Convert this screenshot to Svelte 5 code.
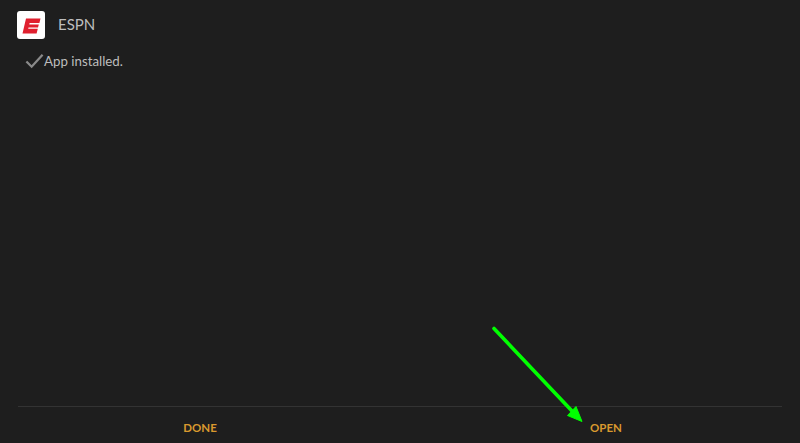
<script>
    const appName = 'ESPN';
    const message = 'App installed.';
</script>

<div class="screen">
    <header class="app-row">
        <div class="app-icon">
            <svg viewBox="0 0 28 28" width="28" height="28">
                <path d="M9 7.5 H23.5 L22.4 12 H12.6 L12.3 13.4 H21.8 L21 16.4 H11.5 L11.2 17.8 H20.8 L19.6 22.5 H5.5 Z" fill="#e0202f" />
            </svg>
        </div>
        <span class="app-name">{appName}</span>
    </header>

    <div class="status">
        <svg class="check" viewBox="0 0 20 16" width="19" height="16">
            <path d="M1.5 8.5 L7 14 L18.5 1.5" fill="none" stroke="#8a8a8a" stroke-width="2.4" />
        </svg>
        <span>{message}</span>
    </div>

    <footer class="actions">
        <button>DONE</button>
        <button>OPEN</button>
    </footer>

    <svg class="arrow" viewBox="0 0 800 443" width="800" height="443">
        <line x1="494" y1="328.5" x2="572" y2="411" stroke="#00ff00" stroke-width="3.6" stroke-linecap="round" />
        <path d="M582 421.5 L567.5 415.5 L576 406.5 Z" fill="#00ff00" stroke="#00ff00" />
    </svg>
</div>

<style>
    :global(body) {
        background: #1e1e1e;
    }

    .screen {
        position: relative;
        display: flex;
        flex-direction: column;
        width: 800px;
        height: 443px;
        overflow: hidden;
        background: #1e1e1e;
        font-family: Lato, sans-serif;
    }

    .app-row {
        display: flex;
        align-items: flex-start;
        gap: 13px;
        padding: 11px 0 0 17px;
    }

    .app-icon {
        width: 28px;
        height: 28px;
        background: #fff;
        border-radius: 3px;
    }

    .app-icon svg {
        display: block;
    }

    .app-name {
        font-size: 15px;
        line-height: 26px;
        color: #bdbdbd;
    }

    .status {
        display: flex;
        align-items: center;
        padding: 14px 0 0 25px;
        font-size: 13.3px;
        color: #bdbdbd;
    }

    .actions {
        display: grid;
        grid-template-columns: 364px 1fr;
        column-gap: 48px;
        margin: auto 18px 0;
        height: 37px;
        padding-top: 5px;
        box-sizing: border-box;
        border-top: 1px solid #333;
    }

    button {
        background: none;
        border: none;
        padding: 0;
        font-family: inherit;
        font-size: 11.5px;
        font-weight: 700;
        color: #d9992e;
    }

    .arrow {
        position: absolute;
        top: 0;
        left: 0;
        pointer-events: none;
    }
</style>
